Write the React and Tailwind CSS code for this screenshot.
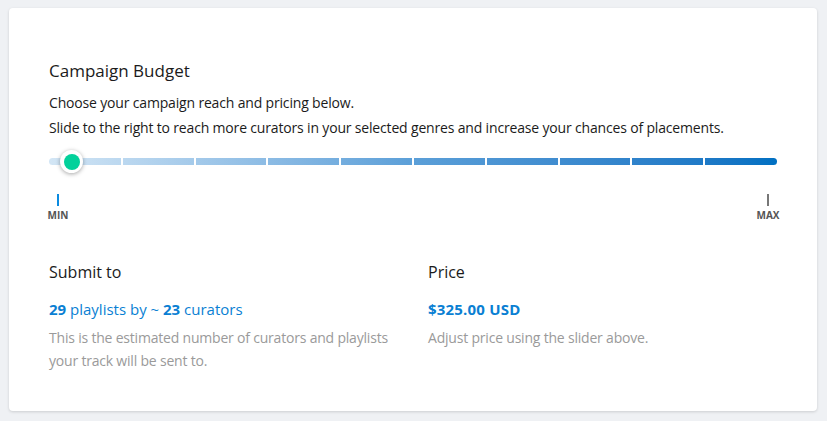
export default function App() {
  const seps = [1, 2, 3, 4, 5, 6, 7, 8, 9];
  return (
    <div className="w-[827px] h-[421px] bg-[#eff1f4] pt-[8px] pl-[9px]" style={{ fontFamily: "'Open Sans', Lato, sans-serif" }}>
      <div className="w-[808px] h-[403px] bg-white rounded-[4px] shadow-[0_1px_3px_rgba(0,0,0,0.15)] pl-[40px] pr-[40px] pt-[51px]">
        <h2 className="text-[17px] leading-[24px] text-[#1b1b1b] font-medium">Campaign Budget</h2>
        <div className="mt-[7px] text-[14px] leading-[25px] tracking-[-0.17px] text-[#1b1b1b]">
          <p>Choose your campaign reach and pricing below.</p>
          <p>Slide to the right to reach more curators in your selected genres and increase your chances of placements.</p>
        </div>
        <div className="relative mt-[10px] h-[22px] w-[728px]">
          <div className="absolute left-0 right-0 top-[8px] h-[7px] rounded-full bg-gradient-to-r from-[#d3e6f5] via-[#5b9fd8] to-[#0070c2] overflow-hidden">
            {seps.map((i) => (
              <div key={i} className="absolute top-0 bottom-0 w-[2px] bg-white" style={{ left: `${(i * 728) / 10 - 1}px` }} />
            ))}
          </div>
          <div className="absolute left-[11px] top-0 w-[23px] h-[23px] rounded-full bg-white shadow-[0_1px_4px_rgba(0,0,0,0.35)] flex items-center justify-center">
            <div className="w-[16px] h-[16px] rounded-full bg-[#03d19b]" />
          </div>
        </div>
        <div className="mt-[22px] flex justify-between w-[740px] -ml-[6px]">
          <div className="flex flex-col items-center w-[30px]">
            <div className="w-[2px] h-[12px] bg-[#0a8be0]" />
            <span className="mt-[3px] text-[10px] leading-[13px] font-bold text-[#555]">MIN</span>
          </div>
          <div className="flex flex-col items-center w-[30px]">
            <div className="w-[2px] h-[12px] bg-[#777]" />
            <span className="mt-[3px] text-[10px] leading-[13px] font-bold text-[#555]">MAX</span>
          </div>
        </div>
        <div className="mt-[38px] flex">
          <div className="w-[379px]">
            <h3 className="text-[16px] leading-[24px] text-[#1b1b1b] font-medium">Submit to</h3>
            <p className="mt-[14px] text-[15px] leading-[22px] text-[#0a7fd3]">
              <span className="font-bold">29</span> playlists by ~ <span className="font-bold">23</span> curators
            </p>
            <p className="mt-[6px] w-[350px] text-[14px] leading-[23px] tracking-[-0.2px] text-[#9a9a9a]">
              This is the estimated number of curators and playlists your track will be sent to.
            </p>
          </div>
          <div>
            <h3 className="text-[16px] leading-[24px] text-[#1b1b1b] font-medium">Price</h3>
            <p className="mt-[14px] text-[15px] leading-[22px] tracking-[0.2px] text-[#0a7fd3] font-bold">$325.00 USD</p>
            <p className="mt-[6px] text-[14px] leading-[23px] tracking-[-0.2px] text-[#9a9a9a]">Adjust price using the slider above.</p>
          </div>
        </div>
      </div>
    </div>
  );
}
